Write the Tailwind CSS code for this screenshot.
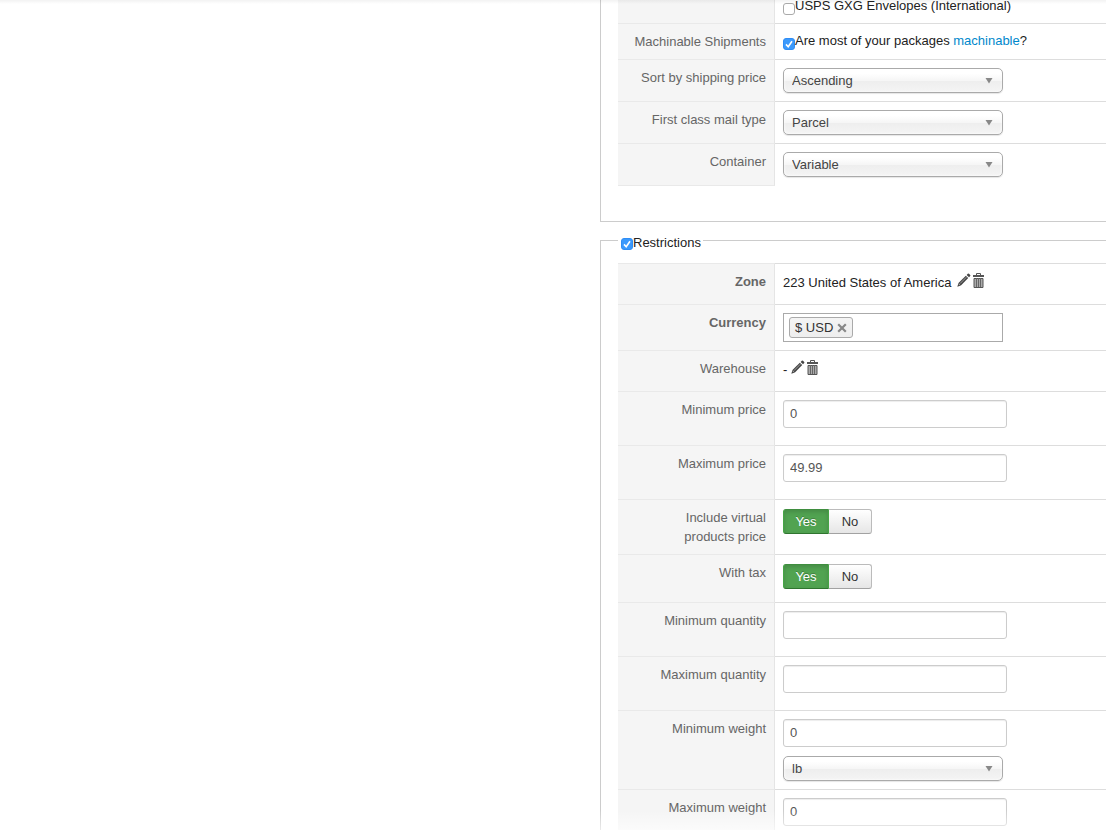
<!DOCTYPE html>
<html lang="en">
<head>
    <meta charset="UTF-8">
    <meta name="viewport" content="width=device-width, initial-scale=1.0">
    <title>Shipping method</title>
    <script src="https://cdn.jsdelivr.net/npm/@tailwindcss/browser@4"></script>
    <style>
        body {
            font-family: "Liberation Sans", Arial, sans-serif;
        }
        .row {
            display: flex;
        }
        .row > :first-child {
            width: 157px;
            flex-shrink: 0;
            padding: 8px 8px 8px 12px;
            text-align: right;
            color: #666;
            background: #f5f5f5;
            border-top: 1px solid #e9e9e9;
            border-right: 1px solid #e5e5e5;
        }
        .row > :last-child {
            flex-grow: 1;
            padding: 8px;
            border-top: 1px solid #ddd;
        }
        .text {
            display: block;
            width: 224px;
            height: 28px;
            margin-bottom: 9px;
            padding: 0 6px 2px;
            color: #555;
            background: #fff;
            border: 1px solid #ccc;
            border-radius: 3px;
            box-shadow: inset 0 1px 1px rgba(0, 0, 0, .075);
        }
        .select {
            position: relative;
            width: 220px;
        }
        .select select {
            display: block;
            appearance: none;
            width: 100%;
            height: 25px;
            padding: 0 8px;
            color: #444;
            border: 1px solid #aaa;
            border-radius: 5px;
            background: linear-gradient(#fff 20%, #f6f6f6 50%, #eee 52%, #f4f4f4 100%);
            box-shadow: 0 0 3px #fff inset, 0 1px 1px rgba(0, 0, 0, .1);
        }
        .select svg {
            position: absolute;
            right: 10px;
            top: 10px;
            pointer-events: none;
        }
        .check {
            display: grid;
            flex-shrink: 0;
            width: 12px;
            height: 12px;
        }
        .check > * {
            grid-area: 1 / 1;
        }
        .check input {
            appearance: none;
            width: 12px;
            height: 12px;
            background: #fff;
            border: 1px solid #aaa;
            border-radius: 3px;
        }
        .check input:checked {
            background: #3b99fc;
            border-color: #2f8df5;
        }
        .check svg {
            pointer-events: none;
        }
        .yes, .no {
            height: 25px;
            border: 1px solid #bbb;
        }
        .yes {
            width: 46px;
            color: #fff;
            text-shadow: 0 -1px 0 rgba(0, 0, 0, .25);
            background: #51a351;
            border-color: #3f8e3f #46a546 #2f752f #46a546;
            border-radius: 3px 0 0 3px;
            box-shadow: inset 0 2px 4px rgba(0, 0, 0, .15);
        }
        .no {
            width: 43px;
            color: #333;
            background: linear-gradient(#fff, #e6e6e6);
            border-left: 0;
            border-bottom-color: #a2a2a2;
            border-radius: 0 3px 3px 0;
        }
    </style>
</head>
<body class="bg-white text-[13px] leading-[19px] text-[#222]">

    <!-- shared icons -->
    <svg class="hidden">
        <symbol id="arrow" viewBox="0 0 8 6"><path d="M0.5 0h7L4 5.5z" fill="#888"/></symbol>
        <symbol id="tick" viewBox="0 0 12 12"><path d="M3 6.4l2.2 2.4L9 3.2" fill="none" stroke="#fff" stroke-width="1.6"/></symbol>
        <symbol id="pencil" viewBox="0 0 14 14">
            <path d="M0.3 13.7l1.2-3.7L8.8 2.7l2.4 2.4-7.3 7.3z" fill="#444"/>
            <path d="M9.6 1.9l1.2-1.2q.6-.5 1.2 0l1.2 1.2q.5.6 0 1.2L12 4.3z" fill="#444"/>
            <path d="M3 10.6l6.4-6.4" stroke="#aaa" stroke-width="0.9"/>
            <path d="M1.6 10.8l1.6 1.6" stroke="#ccc" stroke-width="0.8"/>
        </symbol>
        <symbol id="trash" viewBox="0 0 12 15">
            <path d="M3.5 2V0.5h4V2" fill="none" stroke="#555"/>
            <path d="M0 2h11v2H0z" fill="#555"/>
            <path d="M1 5.5h9v9H1z" fill="#aaa" stroke="#555"/>
            <path d="M3.5 5V14M5.5 5V14M7.5 5V14" stroke="#666"/>
        </symbol>
    </svg>

    <div class="relative h-screen overflow-hidden">
        <main class="pl-[600px]">

            <fieldset class="min-w-0 border-b border-l border-[#ccc] pb-9 pl-[17px]">
                <div class="row">
                    <div class="border-t-0! pt-0!"></div>
                    <div class="border-t-0! pt-0!">
                        <label class="flex leading-3">
                            <span class="check mt-[3px]"><input type="checkbox"></span>
                            <span>USPS GXG Envelopes (International)</span>
                        </label>
                    </div>
                </div>
                <div class="row">
                    <label for="machinable">Machinable Shipments</label>
                    <div class="flex leading-[17px]">
                        <span class="check mt-1.5">
                            <input id="machinable" type="checkbox" checked>
                            <svg width="12" height="12"><use href="#tick"/></svg>
                        </span>
                        <span>Are most of your packages <a href="#" class="text-[#08c]">machinable</a>?</span>
                    </div>
                </div>
                <div class="row">
                    <label for="sort">Sort by shipping price</label>
                    <div>
                        <div class="select">
                            <select id="sort"><option>Ascending</option><option>Descending</option></select>
                            <svg width="8" height="6"><use href="#arrow"/></svg>
                        </div>
                    </div>
                </div>
                <div class="row">
                    <label for="mailtype">First class mail type</label>
                    <div>
                        <div class="select">
                            <select id="mailtype"><option>Parcel</option></select>
                            <svg width="8" height="6"><use href="#arrow"/></svg>
                        </div>
                    </div>
                </div>
                <div class="row">
                    <label for="container" class="-mb-px border-b border-b-[#e9e9e9]">Container</label>
                    <div>
                        <div class="select">
                            <select id="container"><option>Variable</option></select>
                            <svg width="8" height="6"><use href="#arrow"/></svg>
                        </div>
                    </div>
                </div>
            </fieldset>

            <fieldset class="mt-[7px] min-w-0 border-l border-t border-[#ccc] pl-[17px]">
                <legend class="pl-[3px] pr-[2px] pt-1">
                    <label class="flex">
                        <span class="check mt-[5px]">
                            <input type="checkbox" checked>
                            <svg width="12" height="12"><use href="#tick"/></svg>
                        </span>
                        <span>Restrictions</span>
                    </label>
                </legend>
                <div class="pt-[11px]">
                    <div class="row">
                        <div class="font-bold">Zone</div>
                        <div class="flex leading-[21px]">
                            <span class="mr-1.5">223 United States of America</span>
                            <button type="button" title="Edit" class="h-6 pb-2"><svg width="14" height="14"><use href="#pencil"/></svg></button>
                            <button type="button" title="Delete" class="ml-0.5 h-6 pb-2"><svg width="12" height="15"><use href="#trash"/></svg></button>
                        </div>
                    </div>
                    <div class="row">
                        <label for="currency" class="font-bold">Currency</label>
                        <div>
                            <div class="flex h-[29px] w-[220px] items-center border border-[#aaa] px-[5px]">
                                <span class="flex h-[21px] shrink-0 items-center gap-1 rounded-[3px] border border-[#aaa] bg-linear-to-b from-[#f4f4f4] to-[#eee] px-[5px] text-[#333]">
                                    $ USD
                                    <button type="button" title="Remove"><svg width="10" height="10" viewBox="0 0 10 10"><path d="M1.2 1.2l7.6 7.6M8.8 1.2L1.2 8.8" stroke="#888" stroke-width="2.2"/></svg></button>
                                </span>
                                <input id="currency" type="text" class="min-w-0 grow outline-none">
                            </div>
                        </div>
                    </div>
                    <div class="row">
                        <div>Warehouse</div>
                        <div class="flex leading-[21px]">
                            <span class="mr-1">-</span>
                            <button type="button" title="Edit" class="h-6 pb-2"><svg width="14" height="14"><use href="#pencil"/></svg></button>
                            <button type="button" title="Delete" class="ml-0.5 h-6 pb-2"><svg width="12" height="15"><use href="#trash"/></svg></button>
                        </div>
                    </div>
                    <div class="row">
                        <label for="minprice">Minimum price</label>
                        <div><input id="minprice" type="text" class="text" value="0"></div>
                    </div>
                    <div class="row">
                        <label for="maxprice">Maximum price</label>
                        <div><input id="maxprice" type="text" class="text" value="49.99"></div>
                    </div>
                    <div class="row">
                        <div>Include virtual<br>products price</div>
                        <div>
                            <div class="flex pt-px"><button type="button" class="yes">Yes</button><button type="button" class="no">No</button></div>
                        </div>
                    </div>
                    <div class="row">
                        <div>With tax</div>
                        <div>
                            <div class="flex pb-[5px] pt-px"><button type="button" class="yes">Yes</button><button type="button" class="no">No</button></div>
                        </div>
                    </div>
                    <div class="row">
                        <label for="minqty">Minimum quantity</label>
                        <div><input id="minqty" type="text" class="text"></div>
                    </div>
                    <div class="row">
                        <label for="maxqty">Maximum quantity</label>
                        <div><input id="maxqty" type="text" class="text"></div>
                    </div>
                    <div class="row">
                        <label for="minweight">Minimum weight</label>
                        <div>
                            <input id="minweight" type="text" class="text" value="0">
                            <div class="select">
                                <select aria-label="Weight unit"><option>lb</option><option>kg</option></select>
                                <svg width="8" height="6"><use href="#arrow"/></svg>
                            </div>
                        </div>
                    </div>
                    <div class="row">
                        <label for="maxweight">Maximum weight</label>
                        <div><input id="maxweight" type="text" class="text" value="0"></div>
                    </div>
                </div>
            </fieldset>

        </main>

        <!-- soft edges of the scrolled area -->
        <div class="pointer-events-none absolute inset-x-0 top-0 h-1 bg-linear-to-b from-black/5 to-transparent"></div>
        <div class="pointer-events-none absolute inset-x-0 bottom-0 h-5 bg-linear-to-t from-white/60 to-transparent"></div>
    </div>

</body>
</html>
